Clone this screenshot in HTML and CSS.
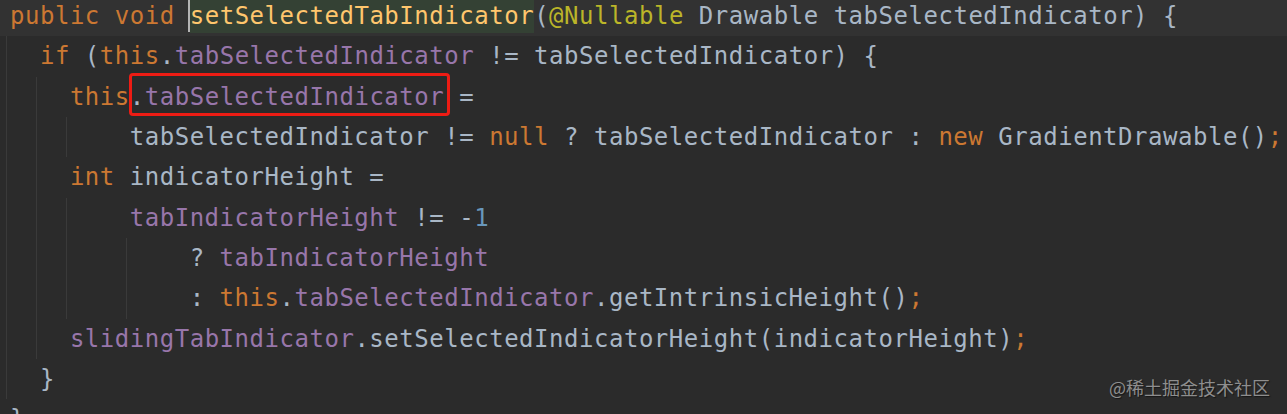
FILE: index.html
```html
<!DOCTYPE html>
<html lang="en">
<head>
  <meta charset="UTF-8" />
  <meta name="viewport" content="width=device-width, initial-scale=1.0"/>
  <title>setSelectedTabIndicator</title>
  <link rel="stylesheet" href="styles.css">
</head>
<body>

  <div class="editor">
    <div class="code">
      <div class="ln cur"><span class="kw">public void</span> <span class="caret"></span><span class="decl">setSelectedTabIndicator</span>(<span class="ann">@Nullable</span> Drawable tabSelectedIndicator) {</div>
      <div class="ln"><span class="g"></span><span class="kw">if</span> (<span class="kw">this</span>.<span class="fld">tabSelectedIndicator</span> != tabSelectedIndicator) {</div>
      <div class="ln"><span class="g"></span><span class="g"></span><span class="kw">this</span><span class="mark">.<span class="fld">tabSelectedIndicator</span></span> =</div>
      <div class="ln"><span class="g"></span><span class="g"></span><span class="g"></span><span class="i"></span>tabSelectedIndicator != <span class="kw">null</span> ? tabSelectedIndicator : <span class="kw">new</span> GradientDrawable()<span class="kw">;</span></div>
      <div class="ln"><span class="g"></span><span class="g"></span><span class="kw">int</span> indicatorHeight =</div>
      <div class="ln"><span class="g"></span><span class="g"></span><span class="g"></span><span class="i"></span><span class="fld">tabIndicatorHeight</span> != -<span class="num">1</span></div>
      <div class="ln"><span class="g"></span><span class="g"></span><span class="g"></span><span class="i"></span><span class="g"></span><span class="i"></span>? <span class="fld">tabIndicatorHeight</span></div>
      <div class="ln"><span class="g"></span><span class="g"></span><span class="g"></span><span class="i"></span><span class="g"></span><span class="i"></span>: <span class="kw">this</span>.<span class="fld">tabSelectedIndicator</span>.getIntrinsicHeight()<span class="kw">;</span></div>
      <div class="ln"><span class="g"></span><span class="g"></span><span class="fld">slidingTabIndicator</span>.setSelectedIndicatorHeight(indicatorHeight)<span class="kw">;</span></div>
      <div class="ln"><span class="g"></span>}</div>
      <div class="ln">}</div>
    </div>
    <div class="watermark">@稀土掘金技术社区</div>
  </div>

</body>
</html>
```

FILE: styles.css
```css
:root {
  --bg: #2b2b2b;
  --line: #323232;
  --text: #a9b7c6;
  --keyword: #cc7832;
  --field: #9876aa;
  --method: #ffc66d;
  --annotation: #bbb529;
  --number: #6897bb;
  --guide: #3a3a3a;
  --col: 14.975px;
  --row: 40.33px;
}

body {
  margin: 0;
  background: var(--bg);
  overflow: hidden;
}

.editor {
  position: relative;
  height: 414px;
  overflow: hidden;
}

.code {
  margin-top: -4px;
  font-family: 'DejaVu Sans Mono', monospace;
  font-size: 24px;
  letter-spacing: 0.525px;
  line-height: var(--row);
  color: var(--text);
}

.ln {
  height: var(--row);
  padding-left: 10px;
  white-space: pre;
}

.ln.cur {
  background: var(--line);
}

/* indent segments, two columns each */
.i,
.g {
  display: inline-block;
  vertical-align: top;
  width: calc(var(--col) * 2);
  height: var(--row);
}

.g {
  border-left: 1px solid var(--guide);
  margin-left: -4px;
  padding-left: 3px;
}

.kw { color: var(--keyword); }
.fld { color: var(--field); }
.ann { color: var(--annotation); }
.num { color: var(--number); }

.decl {
  color: var(--method);
  background: #344134;
  padding: 3px 0;
}

.caret {
  display: inline-block;
  vertical-align: top;
  width: 2px;
  height: 32px;
  margin-top: 4px;
  margin-left: -2px;
  background: #b4b4b4;
}

.mark {
  position: relative;
}

.mark::after {
  content: "";
  position: absolute;
  left: -1px;
  right: -6px;
  top: -10px;
  bottom: -5px;
  border: 3px solid #ee1c14;
  border-radius: 4px;
}

.watermark {
  position: absolute;
  right: 17px;
  bottom: 14px;
  font-family: 'Noto Sans CJK SC', sans-serif;
  font-size: 18px;
  color: #8e8e8e;
  text-shadow: 1px 1px 1px rgba(0, 0, 0, 0.5);
}
```
